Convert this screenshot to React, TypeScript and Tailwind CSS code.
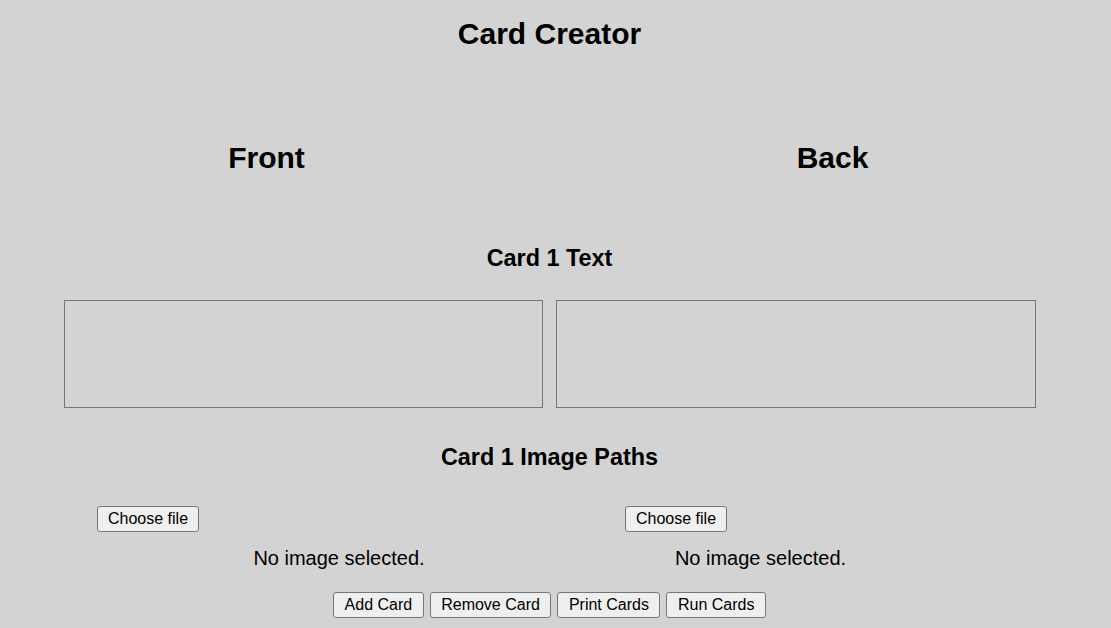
import React from 'react';

const btn =
  'h-[26px] px-[10px] bg-[#efefef] border border-[#767676] rounded-[3px] text-[16px] leading-[18px] text-black';

const FileColumn: React.FC<{ className: string }> = ({ className }) => {
  return (
    <div className={className}>
      <button type="button" className={btn}>
        Choose file
      </button>
      <p className="mt-[14px] text-center text-[20px] leading-[24px]">No image selected.</p>
    </div>
  );
};

export default function App() {
  return (
    <div
      className="min-h-screen bg-[#d3d3d3] text-black"
      style={{ fontFamily: '"Liberation Sans", Arial, sans-serif' }}
    >
      <div className="w-[1099px] pt-[16px]">
        <h1 className="text-center text-[30px] leading-[36px] font-bold">Card Creator</h1>

        {/* Column titles */}
        <div className="mt-[88px] flex justify-between">
          <h2 className="w-[533px] text-center text-[30px] leading-[36px] font-bold">Front</h2>
          <h2 className="w-[533px] text-center text-[30px] leading-[36px] font-bold">Back</h2>
        </div>

        <h3 className="mt-[68px] text-center text-[23.4px] leading-[28px] font-bold">Card 1 Text</h3>

        <div className="mt-[28px] flex gap-[13px] pl-[64px]">
          <textarea className="w-[479px] h-[108px] bg-transparent border border-[#767676] resize-none outline-none" />
          <textarea className="w-[480px] h-[108px] bg-transparent border border-[#767676] resize-none outline-none" />
        </div>

        <h3 className="mt-[35px] text-center text-[23.4px] leading-[28px] font-bold">Card 1 Image Paths</h3>

        {/* Image pickers */}
        <div className="mt-[35px] flex">
          <FileColumn className="ml-[97px] w-[484px]" />
          <FileColumn className="ml-[44px] w-[271px]" />
        </div>

        <div className="mt-[22px] flex justify-center gap-[6px]">
          <button type="button" className={`${btn} !px-[10.5px]`}>Add Card</button>
          <button type="button" className={`${btn} !px-[10.5px]`}>Remove Card</button>
          <button type="button" className={`${btn} !px-[10.5px]`}>Print Cards</button>
          <button type="button" className={`${btn} !px-[10.5px]`}>Run Cards</button>
        </div>
      </div>
    </div>
  );
}
